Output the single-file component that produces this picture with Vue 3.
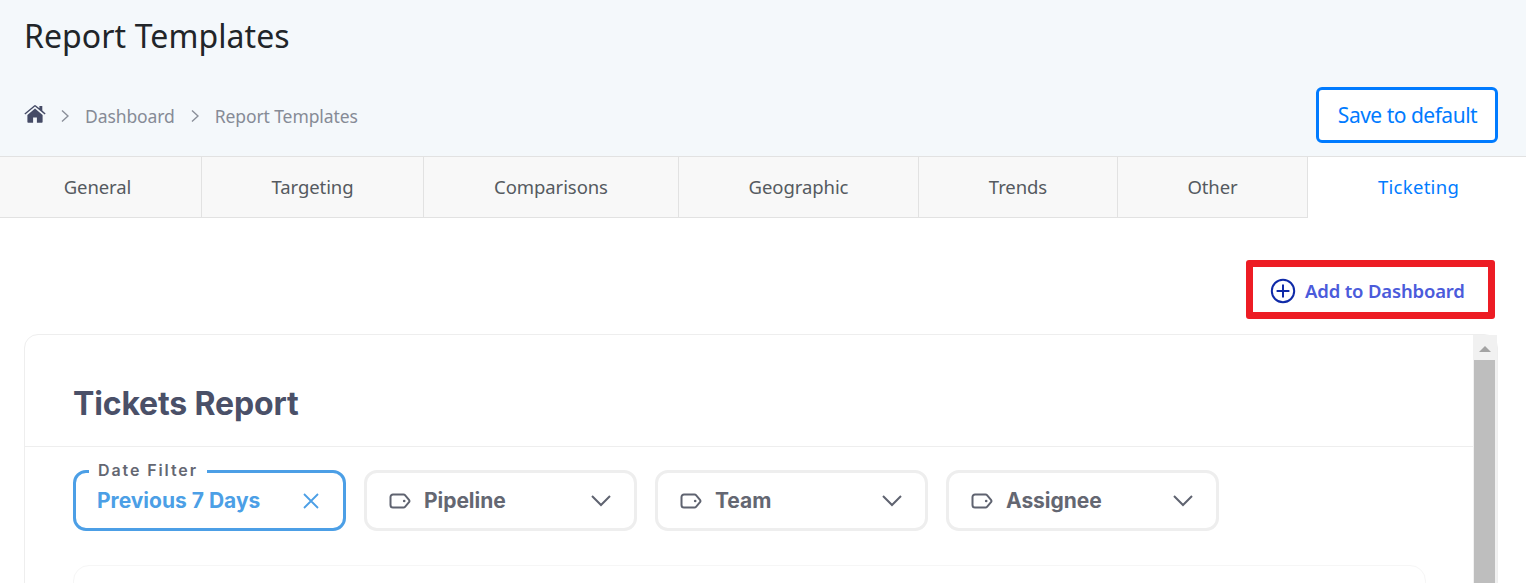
<script setup>
const tabs = [
  { label: 'General', active: false },
  { label: 'Targeting', active: false },
  { label: 'Comparisons', active: false },
  { label: 'Geographic', active: false },
  { label: 'Trends', active: false },
  { label: 'Other', active: false },
  { label: 'Ticketing', active: true },
]
const filters = ['Pipeline', 'Team', 'Assignee']
</script>

<template>
  <div class="page">
    <header class="head">
      <h1 class="title">Report Templates</h1>
      <div class="crumb-row">
        <nav class="crumbs">
          <svg class="home" viewBox="0 0 22 18" width="22" height="18">
            <path fill="#454b66" d="M11 3.6 3.4 9.9V17a.8.8 0 0 0 .8.8h4.9v-5.2h3.8v5.2h4.9a.8.8 0 0 0 .8-.8V9.9z"/>
            <path fill="#454b66" d="M21.6 8.4 18.3 5.6V.9h-2.9v2.3L11.9.4a1.4 1.4 0 0 0-1.8 0L.4 8.4l.9 1.1L11 1.6l9.7 7.9z"/>
          </svg>
          <svg class="sep" viewBox="0 0 8 14" width="8" height="14"><path d="M1 1.5 7 7l-6 5.5" fill="none" stroke="#8a8f99" stroke-width="1.4"/></svg>
          <span>Dashboard</span>
          <svg class="sep" viewBox="0 0 8 14" width="8" height="14"><path d="M1 1.5 7 7l-6 5.5" fill="none" stroke="#8a8f99" stroke-width="1.4"/></svg>
          <span>Report Templates</span>
        </nav>
        <button class="save">Save to default</button>
      </div>
    </header>

    <div class="tabs">
      <div v-for="t in tabs" :key="t.label" class="tab" :class="{ active: t.active }">{{ t.label }}</div>
    </div>

    <div class="actions">
      <div class="add">
        <svg viewBox="0 0 26 26" width="26" height="26">
          <circle cx="13" cy="13" r="11.2" fill="none" stroke="#0f2aa8" stroke-width="2"/>
          <path d="M13 6.6v12.8M6.6 13h12.8" stroke="#0f2aa8" stroke-width="2"/>
        </svg>
        <span>Add to Dashboard</span>
      </div>
    </div>

    <section class="card">
      <div class="card-main">
        <h2 class="report">Tickets Report</h2>
        <div class="filters">
          <div class="chip chosen">
            <span class="legend">Date Filter</span>
            <span class="chosen-text">Previous 7 Days</span>
            <svg viewBox="0 0 18 18" width="18" height="18"><path d="M2 2l14 14M16 2 2 16" stroke="#4c9fe6" stroke-width="1.8"/></svg>
          </div>
          <div v-for="f in filters" :key="f" class="chip">
            <svg class="tag" viewBox="0 0 22 16" width="22" height="16">
              <path d="M4 1.5h10.5a2 2 0 0 1 1.5.7l4 4.6a2 2 0 0 1 0 2.4l-4 4.6a2 2 0 0 1-1.5.7H4A2.5 2.5 0 0 1 1.5 12V4A2.5 2.5 0 0 1 4 1.5z" fill="none" stroke="#5f6370" stroke-width="2" stroke-linejoin="round"/>
              <circle cx="15.2" cy="8" r="1.3" fill="#5f6370"/>
            </svg>
            <span class="chip-text">{{ f }}</span>
            <svg class="chev" viewBox="0 0 22 14" width="22" height="14"><path d="M2 2l9 9 9-9" fill="none" stroke="#5f6370" stroke-width="2"/></svg>
          </div>
        </div>
        <div class="inner"></div>
      </div>
      <div class="scroll">
        <div class="scroll-btn"><i></i></div>
        <div class="thumb"></div>
      </div>
    </section>
  </div>
</template>

<style>
html, body { margin: 0; overflow: hidden; background: #fff; }
</style>

<style scoped>
.page { width: 1526px; height: 583px; overflow: hidden; font-family: "Noto Sans", sans-serif; }
.head { box-sizing: border-box; height: 157px; background: #f4f8fb; border-bottom: 1px solid #e2e2e2; padding: 0 28px 0 24px; }
.title { margin: 0; padding-top: 14px; font-size: 32px; line-height: 44px; font-weight: 400; color: #212529; letter-spacing: 0.08px; }
.crumb-row { display: flex; justify-content: space-between; align-items: center; margin-top: 29px; }
.crumbs { display: flex; align-items: center; font-size: 17.5px; color: #868b96; letter-spacing: -0.1px; padding-top: 2px; }
.home { margin-right: 15px; margin-top: -4px; }
.sep { margin-right: 16px; }
.crumbs span { margin-right: 16px; }
.save { box-sizing: border-box; width: 182px; height: 56px; background: #fff; border: 3px solid #007bff; border-radius: 6px; color: #007bff; font-family: inherit; font-size: 21px; letter-spacing: -0.5px; padding: 0 0 0 1px; }
.tabs { display: grid; grid-template-columns: 202px 222px 255px 240px 199px 190px 1fr; height: 61px; }
.tab { box-sizing: border-box; display: flex; align-items: center; justify-content: center; background: #f8f8f8; border-right: 1px solid #e2e2e2; border-bottom: 1px solid #e2e2e2; color: #555a60; font-size: 18.5px; letter-spacing: -0.08px; padding-bottom: 2px; }
.tab:first-child { padding-right: 6px; }
.tab.active { background: #fff; color: #007bff; border: 0; padding-bottom: 3px; letter-spacing: 0.3px; padding-left: 3px; }
.actions { display: flex; justify-content: flex-end; padding: 42px 31px 15px 0; }
.add { box-sizing: border-box; width: 249px; height: 59px; border: 7px solid #ed1c24; border-radius: 3px; display: flex; align-items: center; padding: 2px 0 0 17px; gap: 9px; color: #4b5bdb; font-weight: 600; font-size: 18.5px; letter-spacing: -0.17px; }
.add svg { flex: none; }
.card { box-sizing: border-box; display: flex; margin-left: 24px; width: 1474px; height: 300px; border: 1px solid #eeeeee; border-radius: 14px 14px 0 0; font-family: Inter, sans-serif; }
.card-main { flex: 1; min-width: 0; }
.report { box-sizing: border-box; height: 112px; margin: 0; padding: 47px 0 0 48px; font-size: 32px; line-height: 44px; font-weight: 700; color: #4a5068; border-bottom: 1px solid #eeeeee; letter-spacing: -0.15px; }
.filters { display: flex; gap: 18px; padding: 23px 0 0 48px; }
.chip { box-sizing: border-box; position: relative; width: 273px; height: 61px; border: 3px solid #eeeeee; border-radius: 13px; display: flex; align-items: center; padding: 0 22px; color: #5f6370; }
.chip-text { flex: 1; margin-left: 13px; font-size: 21px; font-weight: 700; color: #646772; letter-spacing: -0.05px; }
.chip.chosen { border-color: #4c9fe6; justify-content: space-between; padding: 0 23px 0 21px; }
.chosen-text { color: #4c9fe6; font-size: 21px; font-weight: 700; letter-spacing: 0; }
.legend { position: absolute; top: -13px; left: 13px; background: #fff; padding: 0 9px; font-size: 16px; line-height: 20px; font-weight: 600; color: #646772; letter-spacing: 1.9px; }
.inner { box-sizing: border-box; margin: 34px 0 0 48px; width: 1353px; height: 60px; border: 1px solid #f6f6f6; border-radius: 16px 16px 0 0; }
.scroll { width: 24px; background: #f1f1f1; flex: none; box-sizing: border-box; padding: 0 2px 0 1px; }
.scroll-btn { height: 25px; display: flex; align-items: center; justify-content: center; }
.scroll-btn i { width: 0; height: 0; border-left: 6px solid transparent; border-right: 6px solid transparent; border-bottom: 6px solid #a3a3a3; margin-top: 2px; }
.thumb { height: 260px; background: #bebebe; }
</style>
